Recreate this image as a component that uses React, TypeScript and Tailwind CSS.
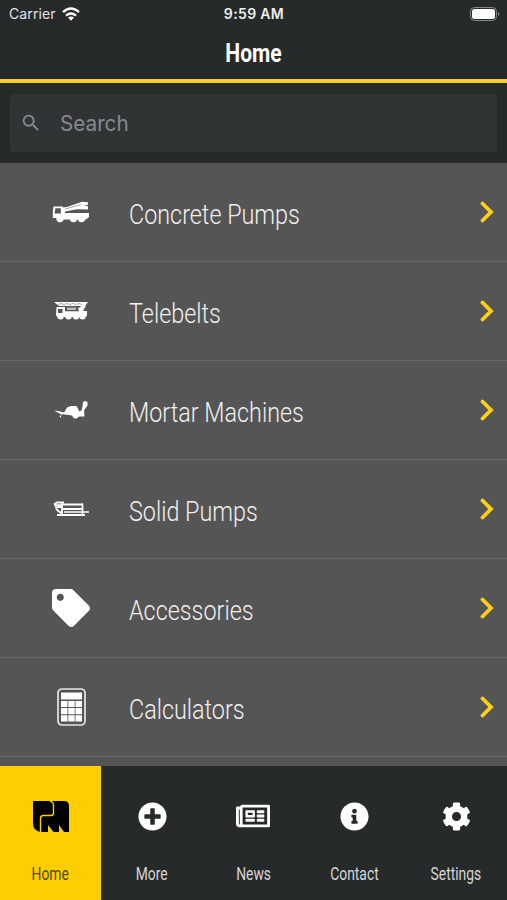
import type { ReactNode } from 'react';
import { FaCog, FaInfoCircle, FaPlusCircle, FaRegNewspaper, FaTag } from 'react-icons/fa';
import { MdSearch } from 'react-icons/md';

function ConcretePumpIcon() {
  return (
    <svg viewBox="0 0 38 22" width="38" height="22" fill="#fff">
      <path d="M1.500 5.500H11V17H.8v-6zM3.400 7.300 2.600 12.500H8.800V7.300z" fillRule="evenodd" />
      <path d="M11 6.500 15 6 30 .8l6 .4v2.600l-4 .5 4 1V8.400L25 8.200l-12 2.300V12h24v4l-3 2.500H8l2-4z" />
      <path d="M13 8 29 3.600" stroke="#555" strokeWidth=".5" />
      <circle cx="8" cy="17.600" r="3.700" />
      <circle cx="21.500" cy="17.600" r="3.700" />
      <circle cx="29.500" cy="17.600" r="3.700" />
    </svg>
  );
}

function TelebeltIcon() {
  return (
    <svg viewBox="0 0 34 18" width="34" height="18" fill="#fff">
      <path d="M0 0h34l-3 4H5z" />
      <path d="m4 2.500 3-1 3 1 3-1 3 1 3-1 3 1 3-1 3 1" fill="none" stroke="#555" strokeWidth=".5" />
      <path d="M2.500 5H11v9H2zM4 7v4h4.500V7z" fillRule="evenodd" />
      <path d="M11 9.200h14l-1-2.700 4-3h4l-3 5.500h4v5l-2 1H3v-2h8z" />
      <path d="M13 5.500h9V8H13z" opacity=".6" />
      <circle cx="6.500" cy="14.200" r="3.200" />
      <circle cx="14.500" cy="14.200" r="3.200" />
      <circle cx="22" cy="14.200" r="3.200" />
      <circle cx="28.500" cy="14.200" r="3.200" />
    </svg>
  );
}

function MortarIcon() {
  return (
    <svg viewBox="0 0 34 18" width="34" height="18" fill="#fff">
      <path d="m0 9.500 5 .8 5 1.200L13 6.500l4-1.500h5.500l2 3.500.5 2 2.500-1 1-4L29 1l2-1 2.500 1v3.500L30 9.500l.5 6h-5L21 17l-3-2.500-9-1.300-1.500.3-.8 3.200L5.500 15.500l2-2z" />
      <circle cx="21.500" cy="14.500" r="3" />
    </svg>
  );
}

function SolidPumpIcon() {
  return (
    <svg viewBox="0 0 36 16" width="36" height="16" fill="none" stroke="#fff">
      <path d="M1 3.500 4 1.500h7M1 4.200h9M2 6.500l4-.5h4M3 8l5 4M9 2v12" strokeWidth="1.800" />
      <path d="M10 3.500h20M10 8h19M4 14h28" strokeWidth="2" />
      <path d="M29.500 2.500V14M11 11h25" strokeWidth="1.700" />
    </svg>
  );
}

function CalculatorIcon() {
  return (
    <svg viewBox="0 0 29 38" width="29" height="38" fill="#fff">
      <rect x="1" y="1" width="27" height="36" rx="4" fill="none" stroke="#e6e6e6" strokeWidth="1.700" />
      <rect x="4" y="4.500" width="21" height="7" />
      <path d="M4 13h6.500v6H4zM11.300 13h6.400v6h-6.400zM18.500 13H25v6h-6.500zM4 20h6.500v6.200H4zM11.300 20h6.400v6.200h-6.400zM18.500 20H25v6.200h-6.500zM4 27.200h6.500v6.300H4zM11.300 27.200h6.400v6.300h-6.400zM18.500 27.200H25v6.300h-6.500z" />
    </svg>
  );
}

function LogoIcon() {
  return (
    <svg viewBox="0 0 36 31" width="36" height="31">
      <path d="M1 0h30q5 0 5 5v26h-5l-5-7v7h-5.500L15 24v7H7.500Q0 30 0 22V1q0-1 1-1z" />
      <path d="M17 0q3.500 1 3.500 4v8q0 2.500-2.500 2.500h-7.500q-3 0-3 3V31" fill="none" stroke="#ffce00" strokeWidth="1.400" />
    </svg>
  );
}

function WifiIcon() {
  return (
    <svg viewBox="0 0 18 14" width="18" height="14" fill="none" stroke="#fff" strokeWidth="2.400">
      <path d="M1 5.200Q9-2 17 5.200M4 8.600q5-4.200 10 0" />
      <path d="m6 10.600q3-2.400 6 0L9 13.800z" fill="#fff" stroke="none" />
    </svg>
  );
}

const categories: { label: string; icon: ReactNode }[] = [
  { label: 'Concrete Pumps', icon: <ConcretePumpIcon /> },
  { label: 'Telebelts', icon: <TelebeltIcon /> },
  { label: 'Mortar Machines', icon: <MortarIcon /> },
  { label: 'Solid Pumps', icon: <SolidPumpIcon /> },
  { label: 'Accessories', icon: <FaTag size={38} /> },
  { label: 'Calculators', icon: <CalculatorIcon /> },
];

const tabs: { label: string; icon: ReactNode }[] = [
  { label: 'Home', icon: <LogoIcon /> },
  { label: 'More', icon: <FaPlusCircle size={29} /> },
  { label: 'News', icon: <FaRegNewspaper size={34} /> },
  { label: 'Contact', icon: <FaInfoCircle size={29} /> },
  { label: 'Settings', icon: <FaCog size={29} /> },
];

export default function App() {
  return (
    <div className="flex h-[900px] w-[507px] flex-col overflow-hidden bg-[#555] font-[Roboto,sans-serif] text-white">
      <header className="h-[83px] shrink-0 border-b-4 border-[#f5d023] bg-[#262a2b]">
        <div className="grid h-7 grid-cols-3 items-center pr-[7px] pb-px pl-[9px] font-[Inter,sans-serif] text-[14px]">
          <div className="flex items-center gap-[6px] text-[#e2e3e3]">
            <span className="tracking-[0.1px]">Carrier</span>
            <WifiIcon />
          </div>
          <span className="pr-px text-center font-semibold tracking-[0.35px] text-[#eee]">9:59 AM</span>
          <svg className="justify-self-end" viewBox="0 0 30 14" width="30" height="14">
            <rect x=".5" y=".5" width="26" height="13" rx="4" fill="none" stroke="#858889" />
            <rect x="2" y="2" width="23" height="10" rx="2.500" fill="#fff" />
            <path d="M28 5q3 2 0 4z" fill="#858889" />
          </svg>
        </div>
        <h1 className="flex h-[50px] scale-x-[.81] items-center justify-center text-[26px] font-bold">Home</h1>
      </header>

      <div className="h-20 shrink-0 bg-[#262a2b] px-[10px] pt-[11px]">
        <div className="flex h-[58px] items-center rounded-[3px] bg-[#303435] pl-[10px] text-[#868a90]">
          <MdSearch size={22} />
          <span className="ml-[18px] origin-left scale-x-[.94] font-[Inter,sans-serif] text-[22px]">Search</span>
        </div>
      </div>

      <ul className="min-h-0 flex-1 overflow-hidden">
        {categories.map(({ label, icon }) => (
          <li key={label} className="flex h-[99px] items-center border-b border-[#676767] pr-[13px]">
            <div className="flex w-[129px] justify-center pr-px pb-px pl-[14px]">{icon}</div>
            <span className="origin-left scale-x-[.834] pt-[6px] text-[28px] font-light whitespace-nowrap text-[#f0f0f0]">
              {label}
            </span>
            <svg className="ml-auto" viewBox="0 0 14 22" width="14" height="22">
              <path d="m2.500 2.500 8.500 8.500-8.500 8.500" fill="none" stroke="#fdd017" strokeWidth="3.800" strokeLinecap="round" />
            </svg>
          </li>
        ))}
      </ul>

      <nav className="grid h-[134px] shrink-0 grid-cols-5 bg-[#262a2b]">
        {tabs.map(({ label, icon }, i) => (
          <div
            key={label}
            className={`flex flex-col items-center pt-[31px] ${i === 0 ? 'bg-[#ffce00] text-black' : ''}`}
          >
            <div className="flex h-[38px] items-center">{icon}</div>
            <span
              className={`mt-[26px] scale-x-[.77] text-[18px] leading-[26px] ${i === 0 ? 'text-[#4d4920]' : 'text-[#d5d6d6]'}`}
            >
              {label}
            </span>
          </div>
        ))}
      </nav>
    </div>
  );
}
